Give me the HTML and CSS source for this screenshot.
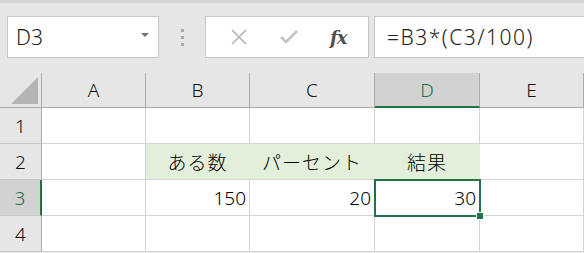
FILE: index.html
```html
<!DOCTYPE html>
<html lang="ja">
<head>
  <meta charset="UTF-8" />
  <title>Excel</title>
  <link rel="stylesheet" href="styles.css">
</head>
<body>

<div class="toolbar">
  <div class="namebox">
    <span class="ref">D3</span>
    <span class="caret"></span>
  </div>
  <div class="dots"><i></i><i></i><i></i></div>
  <div class="buttons">
    <svg class="btn" width="18" height="18" viewBox="0 0 18 18">
      <path d="M2 2 L16 16 M16 2 L2 16" stroke="#b4b4b4" stroke-width="1.6" fill="none"/>
    </svg>
    <svg class="btn" width="20" height="18" viewBox="0 0 20 18">
      <path d="M2 9 L7 14 L18 3" stroke="#c4c4c4" stroke-width="2.6" fill="none"/>
    </svg>
    <span class="fx">fx</span>
  </div>
  <div class="formula">=B3*(C3/100)</div>
</div>

<div class="sheet">
  <div class="corner"><span class="tri"></span></div>
  <div class="colhead">A</div>
  <div class="colhead">B</div>
  <div class="colhead">C</div>
  <div class="colhead active">D</div>
  <div class="colhead">E</div>

  <div class="rowhead">1</div>
  <div class="cell"></div><div class="cell"></div><div class="cell"></div><div class="cell"></div><div class="cell"></div>

  <div class="rowhead">2</div>
  <div class="cell"></div>
  <div class="cell fill center">ある数</div>
  <div class="cell fill center">パーセント</div>
  <div class="cell fill center">結果</div>
  <div class="cell"></div>

  <div class="rowhead active">3</div>
  <div class="cell"></div>
  <div class="cell num">150</div>
  <div class="cell num">20</div>
  <div class="cell num selected">30<span class="handle"></span></div>
  <div class="cell"></div>

  <div class="rowhead">4</div>
  <div class="cell"></div><div class="cell"></div><div class="cell"></div><div class="cell"></div><div class="cell"></div>
</div>

</body>
</html>
```

FILE: styles.css
```css
:root {
  --green: #217346;
  --grid: #d4d4d4;
  --head-bg: #e6e6e6;
  --head-line: #ababab;
  --fill: #e2efda;
}

* {
  margin: 0;
  padding: 0;
  box-sizing: border-box;
}

body {
  width: 584px;
  height: 253px;
  overflow: hidden;
  background: var(--head-bg);
  font-family: "Noto Sans CJK JP", "Noto Sans", sans-serif;
  font-weight: 300;
  color: #000;
}

.toolbar {
  height: 73px;
  display: flex;
  align-items: flex-start;
  padding: 13px 0 0 7px;
  border-top: 3px solid #d6d6d6;
}

.namebox {
  width: 152px;
  height: 42px;
  background: #fff;
  border: 1px solid #c6c6c6;
  display: flex;
  align-items: center;
  justify-content: space-between;
  padding: 0 9px 0 8px;
}

.ref {
  font-family: "Noto Sans", sans-serif;
  font-size: 21px;
  color: #222;
}

.caret {
  width: 0;
  height: 0;
  border-left: 4px solid transparent;
  border-right: 4px solid transparent;
  border-top: 4px solid #707070;
  margin-top: -4px;
}

.dots {
  width: 46px;
  height: 42px;
  display: flex;
  flex-direction: column;
  align-items: center;
  justify-content: center;
  gap: 4px;
}

.dots i {
  display: block;
  width: 3px;
  height: 3px;
  background: #a6a6a6;
}

.buttons {
  width: 164px;
  height: 42px;
  background: #fff;
  border: 1px solid #c6c6c6;
  display: flex;
  align-items: center;
  justify-content: space-around;
  padding: 0 6px 0 8px;
}

.fx {
  font-family: "DejaVu Serif", "Liberation Serif", serif;
  font-style: italic;
  font-weight: bold;
  font-size: 18px;
  color: #505050;
  letter-spacing: -1px;
}

.formula {
  flex: 1;
  height: 42px;
  margin-left: 5px;
  background: #fff;
  border: 1px solid #c6c6c6;
  border-right: none;
  display: flex;
  align-items: center;
  padding-left: 12px;
  font-family: "Noto Sans", sans-serif;
  font-size: 21px;
  letter-spacing: 1.5px;
  color: #222;
}

.sheet {
  display: grid;
  grid-template-columns: 42px 104px 104px 125px 105px 104px;
  grid-template-rows: 35px repeat(4, 36px);
}

.corner,
.colhead,
.rowhead {
  background: var(--head-bg);
  display: flex;
  align-items: center;
  justify-content: center;
  font-size: 19px;
  font-family: "Noto Sans", sans-serif;
  color: #111;
}

.corner {
  position: relative;
  border-right: 1px solid var(--head-line);
  border-bottom: 1px solid var(--head-line);
}

.tri {
  position: absolute;
  right: 3px;
  bottom: 3px;
  width: 0;
  height: 0;
  border-left: 27px solid transparent;
  border-bottom: 27px solid #b4b4b4;
}

.colhead {
  border-right: 1px solid var(--head-line);
  border-bottom: 1px solid var(--head-line);
}

.colhead.active {
  background: #d2d2d2;
  color: var(--green);
  border-bottom: 2px solid var(--green);
}

.rowhead {
  border-right: 1px solid var(--head-line);
  border-bottom: 1px solid #c8c8c8;
}

.rowhead.active {
  background: #d2d2d2;
  color: var(--green);
  border-right: 2px solid var(--green);
}

.cell {
  background: #fff;
  border-right: 1px solid var(--grid);
  border-bottom: 1px solid var(--grid);
  display: flex;
  align-items: center;
  font-size: 19px;
  padding: 0 3px;
  position: relative;
}

.cell.fill {
  background: var(--fill);
  border-right-color: var(--fill);
  letter-spacing: 1px;
}

.center {
  justify-content: center;
}

.num {
  justify-content: flex-end;
  font-family: "Noto Sans", sans-serif;
}

.selected {
  z-index: 1;
  outline: 2px solid var(--green);
  outline-offset: -1px;
}

.handle {
  position: absolute;
  right: -5px;
  bottom: -5px;
  width: 8px;
  height: 8px;
  background: var(--green);
  border: 1px solid #fff;
}
```
